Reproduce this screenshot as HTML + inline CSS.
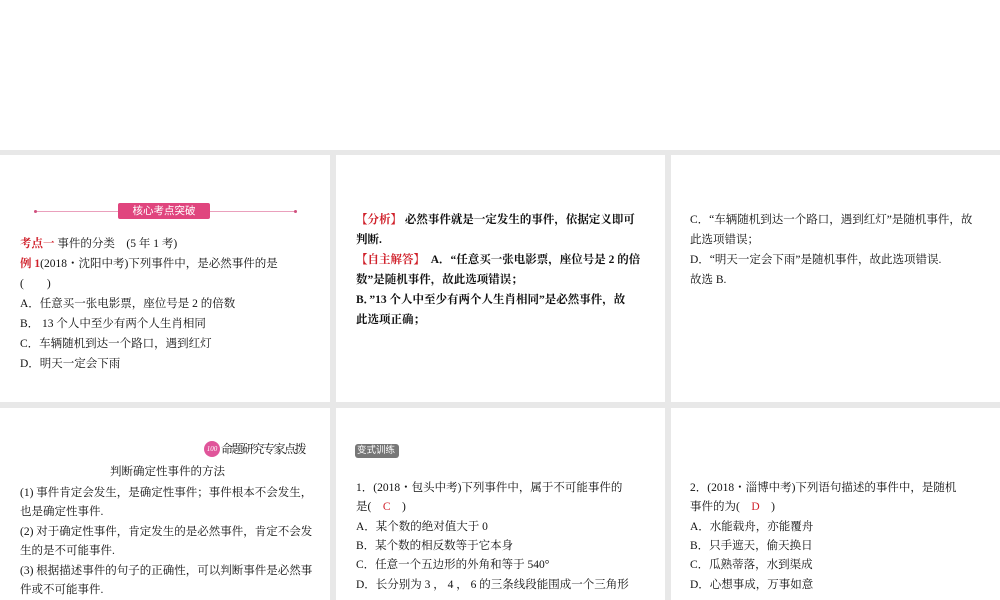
<!DOCTYPE html>
<html><head><meta charset="utf-8"><style>
body{margin:0;width:1000px;height:600px;background:#e8e8e8;position:relative;overflow:hidden;font-family:"Liberation Serif","Noto Serif CJK SC",serif;font-size:11.5px;color:#111}
.p{position:absolute;background:#fff}
.t{position:absolute;white-space:nowrap;line-height:20px}
.r{color:#d0202a}
.b{font-weight:bold}
</style></head><body>
<div class="p" style="left:0;top:0;width:1000px;height:150px"></div>
<div class="p" style="left:0;top:155px;width:330px;height:247px"></div>
<div class="p" style="left:336px;top:155px;width:329px;height:247px"></div>
<div class="p" style="left:671px;top:155px;width:329px;height:247px"></div>
<div class="p" style="left:0;top:408px;width:330px;height:192px"></div>
<div class="p" style="left:336px;top:408px;width:329px;height:192px"></div>
<div class="p" style="left:671px;top:408px;width:329px;height:192px"></div>

<!-- panel 1 -->
<div style="position:absolute;left:35px;top:211px;width:261px;height:1px;background:#eaa0bc"></div>
<div style="position:absolute;left:34px;top:210px;width:3px;height:3px;border-radius:50%;background:#d0507e"></div>
<div style="position:absolute;left:294px;top:210px;width:3px;height:3px;border-radius:50%;background:#d0507e"></div>
<div style="position:absolute;left:118px;top:203px;width:92px;height:16px;background:#e0457e;border-radius:2px;color:#fff;font-size:10.5px;text-align:center;line-height:16px;font-family:'Liberation Sans','Noto Sans CJK SC',sans-serif">核心考点突破</div>
<div class="t" style="left:20px;top:234px"><span class="r b">考点一</span> 事件的分类　(5 年 1 考)</div>
<div class="t" style="left:20px;top:254px"><span class="r b">例 1</span>(2018・沈阳中考)下列事件中，是必然事件的是</div>
<div class="t" style="left:20px;top:274px">(　　)</div>
<div class="t" style="left:20px;top:294px">A．任意买一张电影票，座位号是 2 的倍数</div>
<div class="t" style="left:20px;top:314px">B． 13 个人中至少有两个人生肖相同</div>
<div class="t" style="left:20px;top:334px">C．车辆随机到达一个路口，遇到红灯</div>
<div class="t" style="left:20px;top:354px">D．明天一定会下雨</div>

<!-- panel 2 -->
<div class="t b" style="left:356px;top:210px"><span class="r">【分析】</span> 必然事件就是一定发生的事件，依据定义即可</div>
<div class="t b" style="left:356px;top:230px">判断.</div>
<div class="t b" style="left:356px;top:250px"><span class="r">【自主解答】</span>　A．“任意买一张电影票，座位号是 2 的倍</div>
<div class="t b" style="left:356px;top:270px">数”是随机事件，故此选项错误；</div>
<div class="t b" style="left:356px;top:290px">B．”13 个人中至少有两个人生肖相同”是必然事件，故</div>
<div class="t b" style="left:356px;top:310px">此选项正确；</div>

<!-- panel 3 -->
<div class="t" style="left:690px;top:210px">C．“车辆随机到达一个路口，遇到红灯”是随机事件，故</div>
<div class="t" style="left:690px;top:230px">此选项错误；</div>
<div class="t" style="left:690px;top:250px">D．“明天一定会下雨”是随机事件，故此选项错误.</div>
<div class="t" style="left:690px;top:270px">故选 B.</div>

<!-- panel 4 -->
<div style="position:absolute;left:204px;top:441px;width:16px;height:16px;border-radius:50%;background:#e0559a;color:#fff;font-size:7px;text-align:center;line-height:16px;font-style:italic">100</div>
<div class="t" style="left:221px;top:439px;font-size:12px;letter-spacing:-1.5px">命题研究专家点拨</div>
<div class="t" style="left:110px;top:462px">判断确定性事件的方法</div>
<div class="t" style="left:20px;top:483px">(1) 事件肯定会发生，是确定性事件；事件根本不会发生，</div>
<div class="t" style="left:20px;top:502px">也是确定性事件.</div>
<div class="t" style="left:20px;top:522px">(2) 对于确定性事件，肯定发生的是必然事件，肯定不会发</div>
<div class="t" style="left:20px;top:541px">生的是不可能事件.</div>
<div class="t" style="left:20px;top:561px">(3) 根据描述事件的句子的正确性，可以判断事件是必然事</div>
<div class="t" style="left:20px;top:580px">件或不可能事件.</div>

<!-- panel 5 -->
<div style="position:absolute;left:355px;top:444px;width:42px;height:14px;background:#777;border-radius:3px;color:#fff;font-size:9.5px;line-height:14px;padding-left:2px;font-family:'Liberation Sans','Noto Sans CJK SC',sans-serif">变式训练◐</div>
<div class="t" style="left:356px;top:478px">1．(2018・包头中考)下列事件中，属于不可能事件的</div>
<div class="t" style="left:356px;top:497px">是(　<span class="r">C</span>　)</div>
<div class="t" style="left:356px;top:517px">A．某个数的绝对值大于 0</div>
<div class="t" style="left:356px;top:536px">B．某个数的相反数等于它本身</div>
<div class="t" style="left:356px;top:555px">C．任意一个五边形的外角和等于 540°</div>
<div class="t" style="left:356px;top:575px">D．长分别为 3 ， 4 ， 6 的三条线段能围成一个三角形</div>

<!-- panel 6 -->
<div class="t" style="left:690px;top:478px">2．(2018・淄博中考)下列语句描述的事件中，是随机</div>
<div class="t" style="left:690px;top:497px">事件的为(　<span class="r">D</span>　)</div>
<div class="t" style="left:690px;top:517px">A．水能载舟，亦能覆舟</div>
<div class="t" style="left:690px;top:536px">B．只手遮天，偷天换日</div>
<div class="t" style="left:690px;top:555px">C．瓜熟蒂落，水到渠成</div>
<div class="t" style="left:690px;top:575px">D．心想事成，万事如意</div>
</body></html>
